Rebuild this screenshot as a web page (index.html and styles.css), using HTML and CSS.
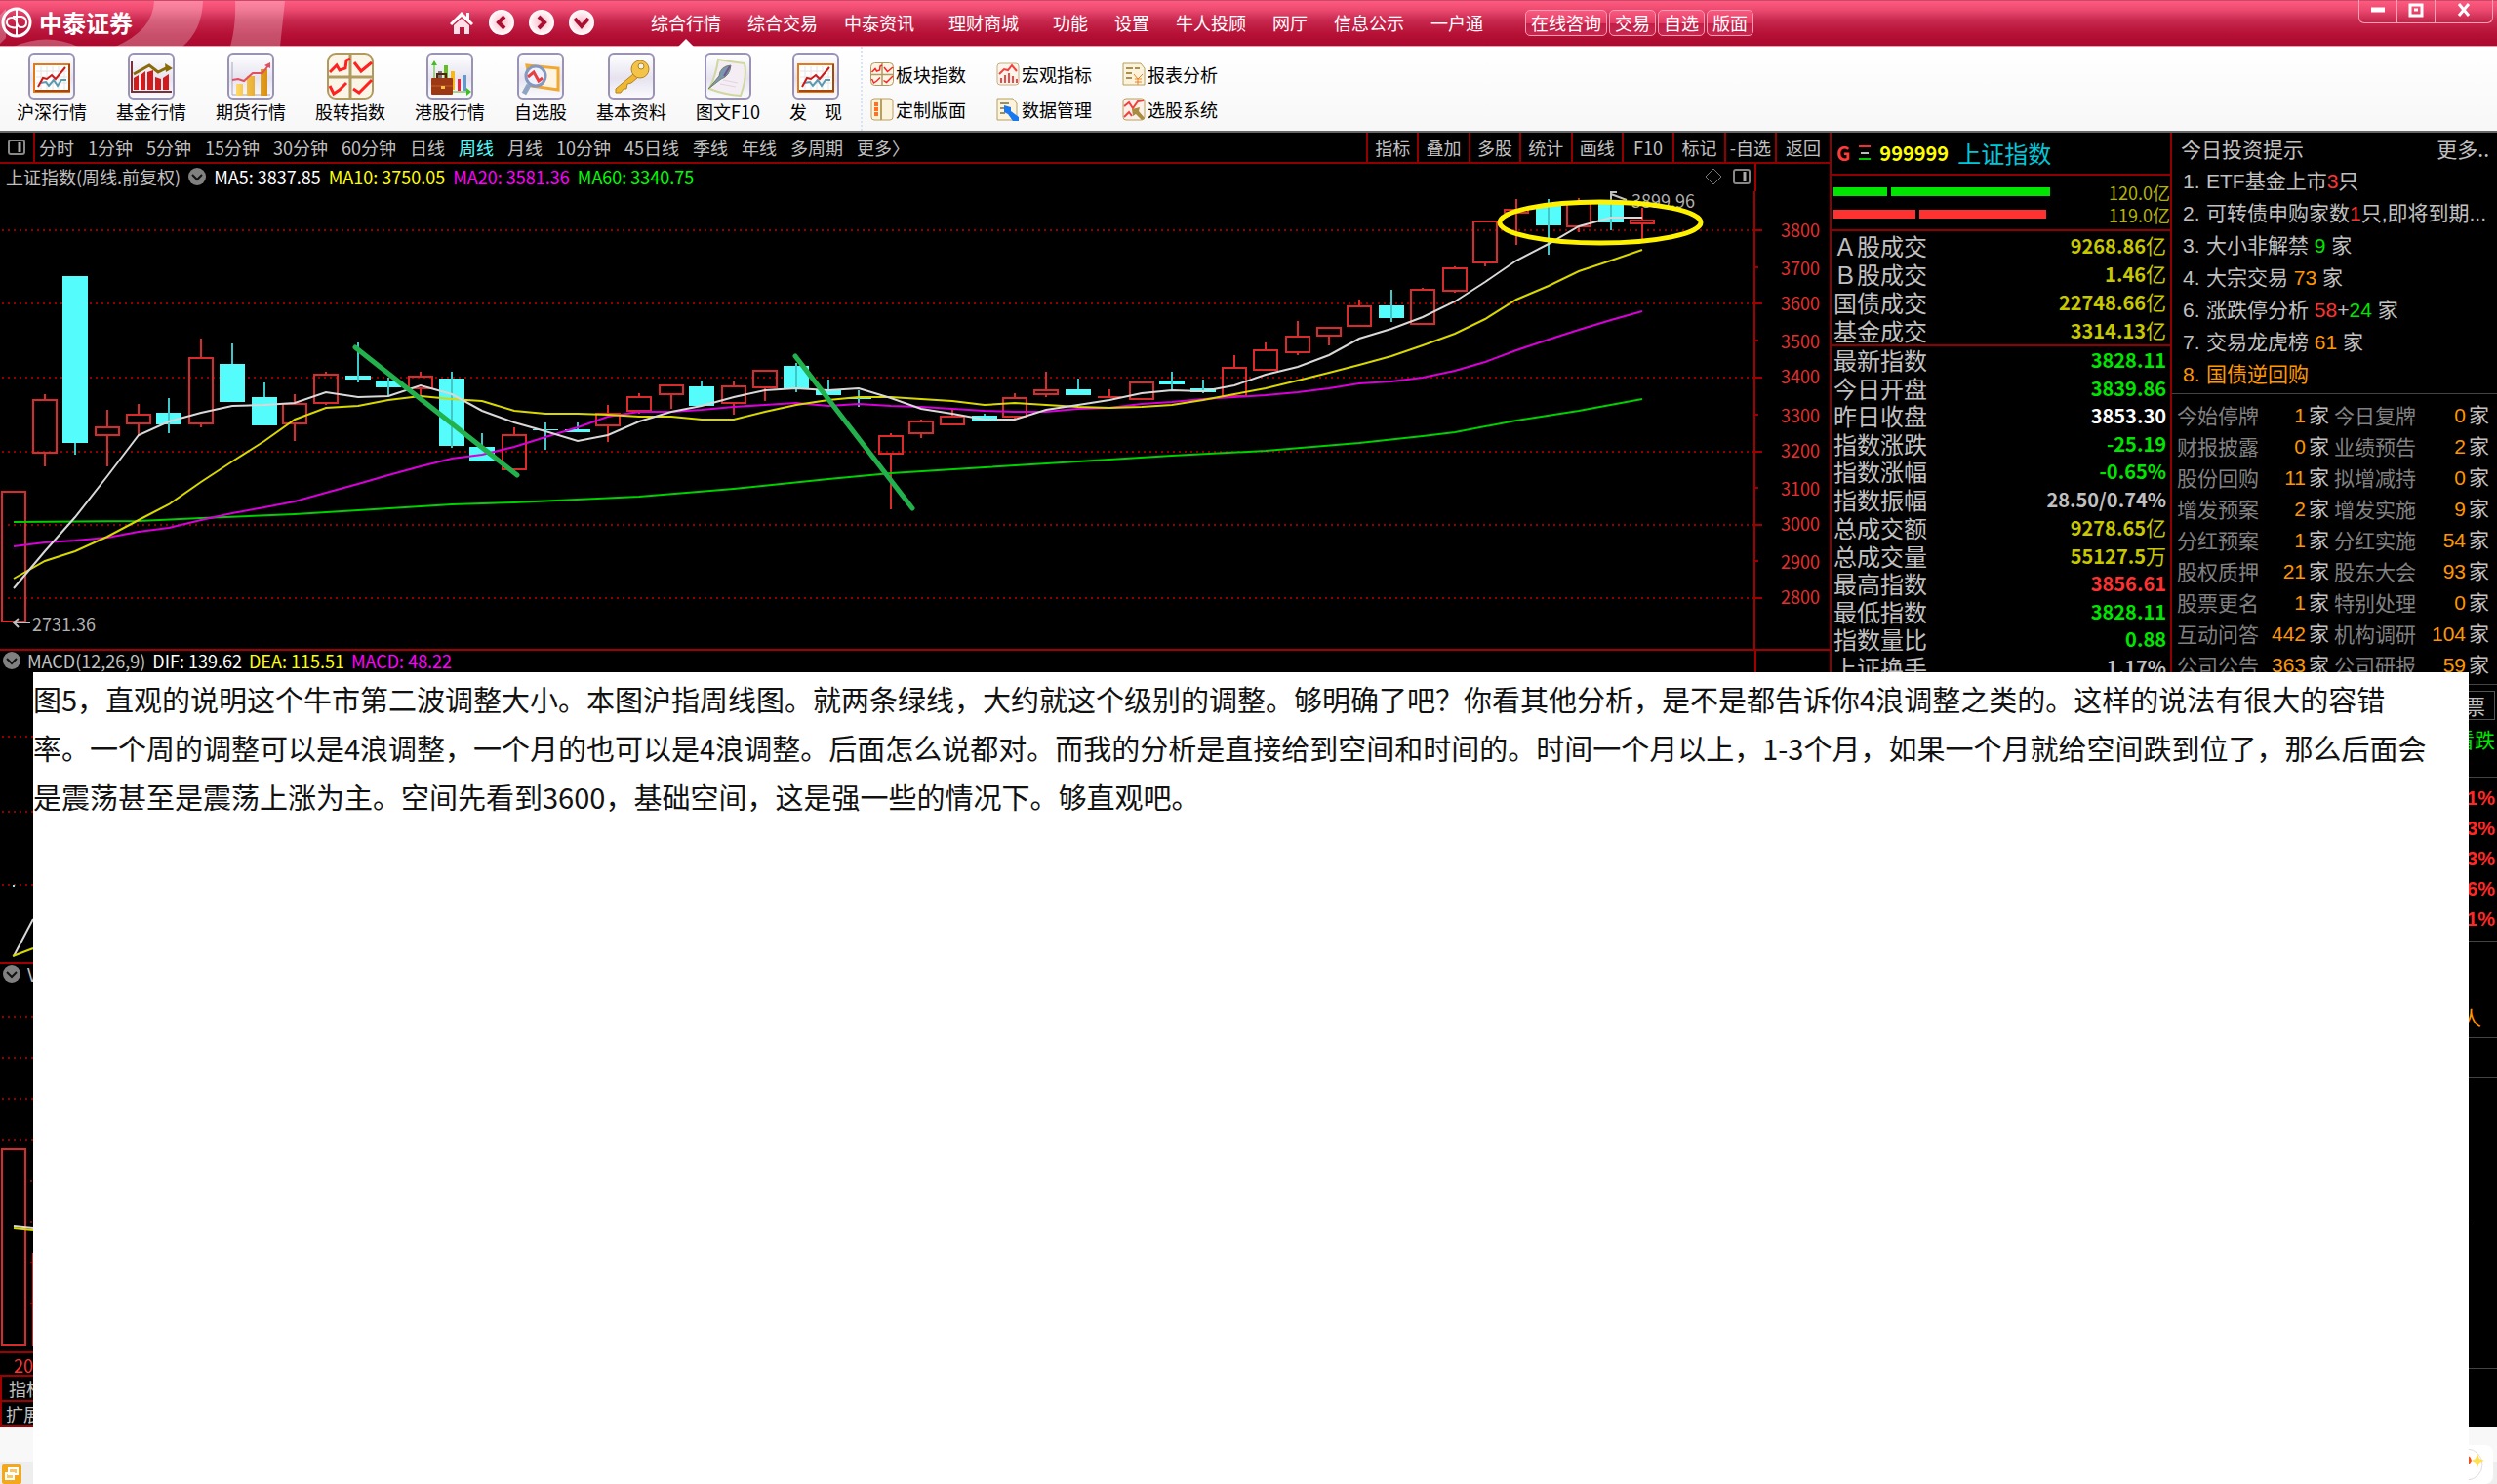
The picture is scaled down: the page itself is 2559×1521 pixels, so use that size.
FILE: index.html
```html
<!DOCTYPE html>
<html lang="zh-CN">
<head>
<meta charset="utf-8">
<title>中泰证券</title>
<link rel="stylesheet" href="styles.css">
</head>
<body>
<svg class="defs" width="0" height="0" aria-hidden="true">
  <defs>
    <linearGradient id="tile" x1="0" y1="0" x2="0" y2="1"><stop offset="0" stop-color="#fff"/><stop offset=".55" stop-color="#e6e3ef"/><stop offset="1" stop-color="#fbfbfe"/></linearGradient>
    <linearGradient id="gold" x1="0" y1="0" x2="1" y2="0"><stop offset="0" stop-color="#ffd966"/><stop offset="1" stop-color="#d89010"/></linearGradient>
    <radialGradient id="ball"><stop offset="0" stop-color="#ffb8c8"/><stop offset="1" stop-color="#fff"/></radialGradient>
    <symbol id="frame" viewBox="0 0 48 48"><rect x="1" y="1" width="46" height="46" rx="5" fill="url(#tile)" stroke="#9a93b5" stroke-width="2"/></symbol>
    <symbol id="board" viewBox="0 0 48 48"><use href="#frame"/><rect x="6" y="12" width="36" height="28" fill="#fff" stroke="#e07a1c" stroke-width="2"/><path d="M7 39H42V12" fill="none" stroke="#a84808" stroke-width="2"/><path d="M13 14V38M19 14V38M25 14V38M31 14V38M37 14V38M8 19H40M8 25H40M8 31H40" stroke="#e4e4e4"/><path d="M12 31L18 30L21 34L26 28L30 34L34 28L39 28" fill="none" stroke="#5a9ab0" stroke-width="2"/><path d="M10 35L15 26L19 27L24 23L28 27L38 15" fill="none" stroke="#d01818" stroke-width="2"/></symbol>
    <symbol id="grid4" viewBox="0 0 48 48"><rect x="1" y="1" width="46" height="46" rx="8" fill="#fbf5e8" stroke="#b09a5e" stroke-width="2"/><path d="M24 1V47M1 25H47" stroke="#b09a5e" stroke-width="3"/><path d="M3 20L10 13L13 18L19 16L20 8L24 6M28 10L35 19L46 10M3 34L7 42L13 38L20 31M27 37L33 41L46 28" fill="none" stroke="#ff2020" stroke-width="3"/></symbol>
  </defs>
</svg>

<header class="titlebar">
  <svg class="swirl" width="300" height="47" viewBox="0 0 300 47" aria-hidden="true"><path d="M158 0H208Q207 30 187 47H118Q157 30 158 0ZM241 0H292L287 47H236Q242 25 241 0ZM14 47Q48 32 80 47ZM0 14L6 8V38L0 44Z" fill="#fff" fill-opacity=".27"/></svg>
  <h1 class="brand"><svg width="32" height="32" viewBox="0 0 32 32" aria-hidden="true"><circle cx="16" cy="16" r="14" fill="none" stroke="#fff" stroke-width="3"/><path d="M16 2V30M16 21Q14 22 11 21Q6 20 6 16Q6 11 11 11Q15 11 16 16Q17 21 21 21Q26 21 26 16Q26 11 21 10H12" fill="none" stroke="#fff" stroke-width="2"/></svg>中泰证券</h1>
  <div class="nav-buttons">
    <button aria-label="主页"><svg width="28" height="28" viewBox="0 0 28 28"><path d="M14 3L2 15L4 17L14 8L24 17L26 15L22 11V4H19V8Z" fill="#fff"/><path d="M6 17L14 10L22 17V26H17V19H12V26H6Z" fill="#ffe0e8"/></svg></button>
    <button aria-label="后退"><svg width="28" height="28" viewBox="0 0 28 28"><circle cx="14" cy="14" r="13" fill="url(#ball)"/><path d="M17 8L11 14L17 20" fill="none" stroke="#a81032" stroke-width="4"/></svg></button>
    <button aria-label="前进"><svg width="28" height="28" viewBox="0 0 28 28"><circle cx="14" cy="14" r="13" fill="url(#ball)"/><path d="M11 8L17 14L11 20" fill="none" stroke="#a81032" stroke-width="4"/></svg></button>
    <button aria-label="展开"><svg width="28" height="28" viewBox="0 0 28 28"><circle cx="14" cy="14" r="13" fill="url(#ball)"/><path d="M7 10L14 18L21 10" fill="none" stroke="#a81032" stroke-width="4"/></svg></button>
  </div>
  <nav class="menu">
    <a class="current" href="#">综合行情</a><a href="#">综合交易</a><a href="#">中泰资讯</a><a class="group" href="#">理财商城</a><a class="group" href="#">功能</a><a href="#">设置</a><a href="#">牛人投顾</a><a href="#">网厅</a><a href="#">信息公示</a><a href="#">一户通</a>
  </nav>
  <div class="pills"><button>在线咨询</button><button>交易</button><button>自选</button><button>版面</button></div>
  <div class="window-controls">
    <button aria-label="最小化"><svg width="16" height="16" viewBox="0 0 16 16"><path d="M1 8H15" stroke="#fff" stroke-width="5"/></svg></button>
    <button aria-label="还原"><svg width="16" height="16" viewBox="0 0 16 16"><path d="M2 3H14V14H2Z" fill="none" stroke="#fff" stroke-width="3"/><path d="M6 8H10" stroke="#fff" stroke-width="3"/></svg></button>
    <button class="close" aria-label="关闭"><svg width="16" height="16" viewBox="0 0 16 16"><path d="M3 2L13 14M13 2L3 14" stroke="#fff" stroke-width="3"/></svg></button>
  </div>
</header>

<div class="toolbar">
  <div class="tools">
    <button><svg width="48" height="48" aria-hidden="true"><use href="#board"/></svg>沪深行情</button>
    <button><svg width="48" height="48" viewBox="0 0 48 48" aria-hidden="true"><use href="#frame"/><path d="M4 9V40H45" fill="none" stroke="#7a3038" stroke-width="2"/><path d="M6 26L11 23V38H6ZM13 23L18 19V38H13ZM20 20L26 18V38H20ZM28 25L34 27V38H28ZM36 26L42 22V38H36Z" fill="#d01c1c"/><path d="M6 22L22 13L31 20L41 15" fill="none" stroke="#8a6a08" stroke-width="3"/><path d="M38 11L46 16L39 20Z" fill="#8a6a08"/></svg>基金行情</button>
    <button><svg width="48" height="48" viewBox="0 0 48 48" aria-hidden="true"><use href="#frame"/><path d="M5 10V43H44" fill="none" stroke="#aaa6b8"/><path d="M9 32H16V44H9ZM20 24H28V44H20ZM34 17H41V44H34Z" fill="url(#gold)"/><path d="M5 28L11 27L17 29L26 21L36 21L43 12" fill="none" stroke="#e05060" stroke-width="2"/><path d="M38 13L44 10V16Z" fill="#e05060"/></svg>期货行情</button>
    <button><svg width="48" height="48" aria-hidden="true"><use href="#grid4"/></svg>股转指数</button>
    <button><svg width="48" height="48" viewBox="0 0 48 48" aria-hidden="true"><use href="#frame"/><path d="M8 30V12M26 40H42" stroke="#50b820"/><path d="M5 13L8 8L11 13ZM41 36L46 40L41 44Z" fill="#40c020"/><path d="M18 13H22V28H18Z" fill="#60c020"/><path d="M12 19H16V28H12Z" fill="#777"/><path d="M25 19H29V38H25Z" fill="#f4b820"/><path d="M32 27H35V39H32Z" fill="#f02040"/><path d="M37 23H41V39H37Z" fill="#6898c8"/><rect x="5" y="26" width="22" height="17" rx="1" fill="#9c3814"/><path d="M11 26V22H20V26" fill="none" stroke="#5a2008" stroke-width="2"/><path d="M5 34H27" stroke="#c86028"/><path d="M15 34H19V37H15Z" fill="#f8c048"/></svg>港股行情</button>
    <button><svg width="48" height="48" viewBox="0 0 48 48" aria-hidden="true"><use href="#frame"/><path d="M10 13L42 16V38L14 34Z" fill="#fff4e0" stroke="#f0a830" stroke-width="3"/><circle cx="19" cy="24" r="10" fill="#eef2fc" stroke="#8498c0" stroke-width="3"/><path d="M11 25L17 20L22 29L26 26" fill="none" stroke="#e84040" stroke-width="3"/><path d="M12 33L7 42" stroke="#8fa4c0" stroke-width="5"/></svg>自选股</button>
    <button><svg width="48" height="48" viewBox="0 0 48 48" aria-hidden="true"><use href="#frame"/><path d="M26 22L8 37V41H13L16 37L19 37L20 32L24 31L30 26" fill="#f0b830" stroke="#b48420"/><circle cx="33" cy="17" r="9" fill="#f4c448" stroke="#b48420"/><circle cx="34" cy="14" r="3" fill="#f4f0e8" stroke="#b48420"/></svg>基本资料</button>
    <button><svg width="48" height="48" viewBox="0 0 48 48" aria-hidden="true"><use href="#frame"/><path d="M14 7Q25 9 41 11Q44 25 37 44Q21 43 5 37Q12 22 14 7Z" fill="#f4eef4" stroke="#d0d8a0" stroke-width="2"/><path d="M16 32L32 35M19 28L34 31" stroke="#e0d4e0"/><path d="M4 37L15 24Q16 14 27 13Q26 24 17 27Z" fill="#7c98b0" stroke="#71826e"/><path d="M20 24L26 14" stroke="#705890" stroke-width="2"/></svg>图文F10</button>
    <button><svg width="48" height="48" aria-hidden="true"><use href="#board"/></svg>发　现</button>
  </div>
  <div class="shortcuts">
    <button><svg width="24" height="24" aria-hidden="true"><use href="#grid4"/></svg>板块指数</button>
    <button><svg width="24" height="24" viewBox="0 0 24 24" aria-hidden="true"><rect x="1" y="1" width="22" height="22" rx="3" fill="#fff4ec" stroke="#c0b080"/><path d="M3 12L8 7L12 8L16 3L21 9" fill="none" stroke="#f04040" stroke-width="2"/><path d="M5 21V16M9 21V13M13 21V11M17 21V14M21 21V17" stroke="#f04848" stroke-width="2"/></svg>宏观指标</button>
    <button><svg width="24" height="24" viewBox="0 0 24 24" aria-hidden="true"><path d="M1 1H19L23 6V23H1Z" fill="#fbf3dc" stroke="#b8a060"/><path d="M4 6H11M4 11H10M4 16H10M13 6H18" stroke="#a89050" stroke-width="2"/><path d="M12 12L16 17L21 12M16 17V23M13 17H20M13 20H20" fill="none" stroke="#f08020"/></svg>报表分析</button>
    <button><svg width="24" height="24" viewBox="0 0 24 24" aria-hidden="true"><rect x="1" y="1" width="22" height="22" rx="3" fill="#fbf3dc" stroke="#b8a060"/><path d="M11 1V23" stroke="#b8a060" stroke-width="2"/><path d="M4 5H8V9H4ZM4 10H8V14H4ZM4 15H8V19H4Z" fill="#ff7020"/></svg>定制版面</button>
    <button><svg width="24" height="24" viewBox="0 0 24 24" aria-hidden="true"><path d="M1 1H17L21 6V23H1Z" fill="#fbf3dc" stroke="#b8a060"/><path d="M4 6H13M4 11H10M4 16H9" stroke="#989068" stroke-width="2"/><path d="M8 8L15 10V14L23 20V24H17L12 17L8 15Z" fill="#1878f0"/></svg>数据管理</button>
    <button><svg width="24" height="24" viewBox="0 0 24 24" aria-hidden="true"><rect x="1" y="1" width="22" height="22" rx="3" fill="#fdf0e8" stroke="#b8a060"/><path d="M2 9L7 5L11 11L16 4L22 3M2 20L7 15L10 19" fill="none" stroke="#f04040" stroke-width="2"/><path d="M10 12L18 10L17 14L23 21L20 23L14 17L11 19Z" fill="#a88c40"/></svg>选股系统</button>
  </div>
</div>

<main class="workspace">
  <section class="chart-panel">
    <div class="tabs">
      <button class="layout-toggle" aria-label="布局"><svg width="18" height="16" viewBox="0 0 18 16"><rect x="1" y="1" width="16" height="14" rx="2" fill="none" stroke="#888" stroke-width="2"/><path d="M12 3V13" stroke="#aaa" stroke-width="3"/></svg></button>
      <div class="periods"><button>分时</button><button>1分钟</button><button>5分钟</button><button>15分钟</button><button>30分钟</button><button>60分钟</button><button>日线</button><button class="active">周线</button><button>月线</button><button>10分钟</button><button>45日线</button><button>季线</button><button>年线</button><button>多周期</button><button>更多〉</button></div>
      <div class="actions"><button>指标</button><button>叠加</button><button>多股</button><button>统计</button><button>画线</button><button>F10</button><button>标记</button><button>-自选</button><button>返回</button></div>
    </div>
    <div class="legend">
      <div class="legend-main">
        <span>上证指数(周线.前复权)</span>
        <svg width="18" height="18" viewBox="0 0 18 18" aria-hidden="true"><circle cx="9" cy="9" r="9" fill="#808080"/><path d="M4 7L9 12L14 7" fill="none" stroke="#111" stroke-width="2"/></svg>
        <span class="white">MA5: 3837.85</span><span class="ma10">MA10: 3750.05</span><span class="ma20">MA20: 3581.36</span><span class="ma60">MA60: 3340.75</span>
        <svg class="legend-tools" width="48" height="18" viewBox="0 0 48 18" aria-hidden="true"><path d="M10 1L18 9L10 17L2 9Z" fill="none" stroke="#777"/><rect x="31" y="2" width="16" height="14" rx="2" fill="none" stroke="#888" stroke-width="2"/><path d="M42 4V14" stroke="#aaa" stroke-width="3"/></svg>
      </div>
      <div class="axis-gap"></div>
    </div>
    <svg class="plot" viewBox="0 196 1875 469" role="img" aria-label="上证指数周线">
      <path class="grid" d="M2 236H1798M2 311H1798M2 387H1798M2 463H1798M8 538H1798M8 613H1798"/>
      <path class="axis" d="M1798 196V665M1798 236H1806M1798 311H1806M1798 387H1806M1798 463H1806M1798 538H1806M1798 613H1806M1798 274H1802M1798 349H1802M1798 425H1802M1798 500H1802M1798 575H1802"/>
      <g class="axis-text"><text x="1825" y="243">3800</text><text x="1825" y="282">3700</text><text x="1825" y="318">3600</text><text x="1825" y="357">3500</text><text x="1825" y="393">3400</text><text x="1825" y="433">3300</text><text x="1825" y="469">3200</text><text x="1825" y="508">3100</text><text x="1825" y="544">3000</text><text x="1825" y="583">2900</text><text x="1825" y="619">2800</text></g>
      <path class="up" d="M2 504h24v133h-24ZM34 410h24v54h-24ZM46 404v6M46 464v14M98 438h24v8h-24ZM110 420v18M110 446v32M130 425h24v9h-24ZM142 414v11M142 434v12M194 367h24v67h-24ZM206 347v20M206 434v4M290 414h24v20h-24ZM302 404v10M302 434v18M322 384h24v29h-24ZM334 381v3M334 413v2M419 386h24v12h-24ZM431 381v5M431 398v8M515 446h24v35h-24ZM527 438v8M611 424h24v12h-24ZM623 415v9M623 436v17M643 407h24v14h-24ZM655 403v4M655 421v3M676 395h24v9h-24ZM688 404v15M740 396h24v17h-24ZM752 391v5M752 413v12M772 380h24v17h-24ZM784 397v14M901 447h24v18h-24ZM913 444v3M913 465v57M932 432h24v12h-24ZM944 430v2M944 444v5M964 427h24v8h-24ZM976 419v8M1028 408h24v19h-24ZM1040 403v5M1040 427v3M1060 400h24v4h-24ZM1072 381v19M1072 404v3M1125 407h24M1137 399v9M1158 392h24v17h-24ZM1253 377h24v29h-24ZM1265 364v13M1285 359h24v20h-24ZM1297 351v8M1318 345h24v16h-24ZM1330 329v16M1330 361v3M1350 336h24v8h-24ZM1362 344v10M1381 314h24v20h-24ZM1393 307v7M1446 297h24v35h-24ZM1458 295v2M1479 275h24v23h-24ZM1491 273v2M1491 298v2M1510 227h24v42h-24ZM1522 269v4M1542 215h24v3h-24ZM1554 204v47M1606 208h24v24h-24ZM1618 203v5M1618 232v6M1671 226h24v3h-24ZM1683 213v13M1683 229v16"/>
      <path class="down" d="M64 283h26v171h-26ZM160 423h26v12h-26ZM225 373h26v39h-26ZM258 407h26v29h-26ZM354 385h26v4h-26ZM385 390h26v7h-26ZM450 388h26v69h-26ZM481 458h26v15h-26ZM546 440h26v1h-26ZM579 440h26v3h-26ZM706 396h26v20h-26ZM803 375h26v23h-26ZM836 400h26v5h-26ZM867 408h26v1h-26ZM996 426h26v6h-26ZM1092 399h26v6h-26ZM1188 390h26v4h-26ZM1220 398h26v4h-26ZM1413 313h26v13h-26ZM1574 211h26v20h-26ZM1638 209h26v19h-26Z"/>
      <path class="down-wick" d="M77 454v12M173 408v36M238 352v21M271 392v15M367 351v41M398 387v19M463 381v78M494 444v14M559 433v28M592 433v7M719 390v6M816 372v30M849 389v11M880 400v17M1009 424v2M1105 388v11M1201 381v19M1233 389v14M1426 297v33M1587 204v57M1651 202v34"/>
      <polyline class="line ma60-line" points="14,535 142,534 206,531 302,527 367,523 463,517 527,515 655,509 752,501 849,491 913,485 1009,479 1105,473 1201,467 1297,462 1393,454 1458,447 1491,443 1554,431 1618,421 1683,409"/>
      <polyline class="line ma20-line" points="14,560 46,556 77,554 110,551 142,545 173,541 206,533 238,526 271,520 302,514 334,505 367,496 398,487 431,478 463,470 494,466 527,458 559,448 592,438 623,427 655,422 688,422 719,420 752,417 784,415 816,413 849,416 880,414 913,416 944,417 976,419 1009,421 1040,422 1072,422 1105,419 1137,418 1170,414 1201,412 1233,409 1265,407 1297,405 1330,402 1362,398 1393,393 1426,391 1458,387 1491,380 1522,371 1554,359 1587,348 1618,338 1651,328 1683,319"/>
      <polyline class="line ma10-line" points="14,593 46,575 77,565 110,550 142,533 173,517 206,494 238,473 271,452 302,430 334,418 367,416 398,410 431,406 463,409 494,411 527,421 559,424 592,424 623,425 655,427 688,427 719,430 752,430 784,422 816,415 849,410 880,407 913,407 944,409 976,411 1009,415 1040,413 1072,415 1105,417 1137,418 1170,417 1201,415 1233,410 1265,404 1297,398 1330,390 1362,382 1393,374 1426,365 1458,354 1491,342 1522,327 1554,307 1587,293 1618,278 1651,267 1683,256"/>
      <polyline class="line ma5-line" points="14,603 46,565 77,530 110,488 142,446 173,432 206,423 238,416 271,415 302,413 334,402 367,407 398,406 431,395 463,404 494,421 527,433 559,442 592,452 623,446 655,432 688,422 719,416 752,407 784,400 816,398 849,400 880,398 913,408 944,419 976,424 1009,430 1040,430 1072,420 1105,415 1137,410 1170,403 1201,400 1233,401 1265,395 1297,384 1330,376 1362,364 1393,347 1426,337 1458,325 1491,309 1522,289 1554,267 1587,250 1618,232 1651,223 1683,223"/>
      <path class="pointer" d="M31 638H14M19 634L14 638L19 643M1667 205L1651 199M1657 197H1651V204"/>
      <text class="mark" x="33" y="647">2731.36</text><text class="mark" x="1672" y="213">3899.96</text>
      <path class="trend" d="M364 356L530 487M815 365L935 521"/>
      <ellipse class="ring" cx="1640" cy="228" rx="103" ry="21"/>
    </svg>
    <div class="legend sub">
      <div class="legend-main">
        <svg width="18" height="18" viewBox="0 0 18 18" aria-hidden="true"><circle cx="9" cy="9" r="9" fill="#808080"/><path d="M4 7L9 12L14 7" fill="none" stroke="#111" stroke-width="2"/></svg>
        <span>MACD(12,26,9)</span><span class="white">DIF: 139.62</span><span class="ma10">DEA: 115.51</span><span class="ma20">MACD: 48.22</span>
      </div>
      <div class="axis-gap"></div>
    </div>
    <svg class="plot" viewBox="0 689 1875 297" role="img" aria-label="MACD">
      <path class="grid" d="M2 755H1798M2 832H1798M2 907H1798"/>
      <path d="M13 908h2" stroke="#54fcfc" stroke-width="2"/>
      <polyline class="line ma5-line" points="14,980 34,942"/><polyline class="line ma10-line" points="13,980 34,972"/>
    </svg>
    <div class="legend sub">
      <div class="legend-main">
        <svg width="18" height="18" viewBox="0 0 18 18" aria-hidden="true"><circle cx="9" cy="9" r="9" fill="#808080"/><path d="M4 7L9 12L14 7" fill="none" stroke="#111" stroke-width="2"/></svg>
        <span>VOL</span>
      </div>
    </div>
    <svg class="plot" viewBox="0 1010 1875 375" role="img" aria-label="成交量">
      <path class="grid" d="M2 1042H1798M2 1084H1798M2 1126H1798M2 1168H1798M31 1210H1798M31 1252H1798M31 1294H1798M31 1336H1798"/>
      <path class="up" d="M2 1178h24v201h-24ZM34 1285h24v94h-24Z"/>
      <polyline class="line ma5-line" points="14,1257 34,1259"/><polyline class="line ma10-line" points="14,1259 34,1261"/>
    </svg>
    <div class="dates">20</div>
    <div class="strip">指标</div>
    <div class="strip wide">扩展</div>
  </section>

  <section class="quote">
    <h2><span class="flag">G</span><svg width="12" height="16" viewBox="0 0 12 16" aria-hidden="true"><path d="M0 1H12" stroke="#f03030" stroke-width="2"/><path d="M2 8H10" stroke="#bbb" stroke-width="2"/><path d="M0 14H12" stroke="#00c800" stroke-width="2"/></svg><span class="code">999999</span><span class="name">上证指数</span></h2>
    <div class="depth">
      <div class="depth-row buy"><i class="b1"></i><i class="b2"></i><span>120.0亿</span></div>
      <div class="depth-row sell"><i class="s1"></i><i class="s2"></i><span>119.0亿</span></div>
    </div>
    <table class="figures">
      <tr><th>Ａ股成交</th><td class="y">9268.86<b>亿</b></td></tr>
      <tr><th>Ｂ股成交</th><td class="y">1.46<b>亿</b></td></tr>
      <tr><th>国债成交</th><td class="y">22748.66<b>亿</b></td></tr>
      <tr><th>基金成交</th><td class="y">3314.13<b>亿</b></td></tr>
    </table>
    <table class="figures">
      <tr><th>最新指数</th><td class="g">3828.11</td></tr>
      <tr><th>今日开盘</th><td class="g">3839.86</td></tr>
      <tr><th>昨日收盘</th><td class="w">3853.30</td></tr>
      <tr><th>指数涨跌</th><td class="g">-25.19</td></tr>
      <tr><th>指数涨幅</th><td class="g">-0.65%</td></tr>
      <tr><th>指数振幅</th><td>28.50/0.74%</td></tr>
      <tr><th>总成交额</th><td class="y">9278.65<b>亿</b></td></tr>
      <tr><th>总成交量</th><td class="y">55127.5<b>万</b></td></tr>
      <tr><th>最高指数</th><td class="r">3856.61</td></tr>
      <tr><th>最低指数</th><td class="g">3828.11</td></tr>
      <tr><th>指数量比</th><td class="g">0.88</td></tr>
      <tr><th>上证换手</th><td>1.17%</td></tr>
    </table>
  </section>

  <section class="info">
    <div class="info-head"><h2>今日投资提示</h2><a href="#">更多..</a></div>
    <ul class="tips">
      <li><span>1.</span>ETF基金上市<b class="r">3</b>只</li>
      <li><span>2.</span>可转债申购家数<b class="r">1</b>只,即将到期...</li>
      <li><span>3.</span>大小非解禁 <b class="g">9</b> 家</li>
      <li><span>4.</span>大宗交易 <b class="o">73</b> 家</li>
      <li><span>6.</span>涨跌停分析 <b class="r">58</b>+<b class="g">24</b> 家</li>
      <li><span>7.</span>交易龙虎榜 <b class="o">61</b> 家</li>
      <li class="o"><span>8.</span>国债逆回购</li>
    </ul>
    <table class="stats">
      <tr><th>今始停牌</th><td><b>1</b>家</td><th>今日复牌</th><td><b>0</b>家</td></tr>
      <tr><th>财报披露</th><td><b>0</b>家</td><th>业绩预告</th><td><b>2</b>家</td></tr>
      <tr><th>股份回购</th><td><b>11</b>家</td><th>拟增减持</th><td><b>0</b>家</td></tr>
      <tr><th>增发预案</th><td><b>2</b>家</td><th>增发实施</th><td><b>9</b>家</td></tr>
      <tr><th>分红预案</th><td><b>1</b>家</td><th>分红实施</th><td><b>54</b>家</td></tr>
      <tr><th>股权质押</th><td><b>21</b>家</td><th>股东大会</th><td><b>93</b>家</td></tr>
      <tr><th>股票更名</th><td><b>1</b>家</td><th>特别处理</th><td><b>0</b>家</td></tr>
      <tr><th>互动问答</th><td><b>442</b>家</td><th>机构调研</th><td><b>104</b>家</td></tr>
      <tr><th>公司公告</th><td><b>363</b>家</td><th>公司研报</th><td><b>59</b>家</td></tr>
    </table>
    <div class="block vote"><div class="stock-box">票</div><span class="g">看跌</span></div>
    <div class="block rates"><span>1%</span><span>3%</span><span>3%</span><span>6%</span><span>1%</span></div>
    <div class="block people">人</div>
    <div class="block slim"></div>
    <div class="block tall"></div>
    <div class="block tall"></div>
    <div class="block"></div>
  </section>
</main>

<footer class="statusbar">
  <div class="task"><svg width="20" height="20" viewBox="0 0 20 20" aria-hidden="true"><rect width="20" height="20" rx="2" fill="#f4a81c"/><path d="M7 4H16V10H7ZM4 9H12V15H4Z" fill="#f8c868" stroke="#fff" stroke-width="2"/></svg></div>
  <div class="badge"><svg width="40" height="40" viewBox="0 0 40 40" aria-hidden="true"><circle cx="17" cy="20" r="16" fill="#fff" stroke="#e4dcdc"/><path d="M16 13Q20 9 22 16Q19 22 16 19Z" fill="#f05020"/><path d="M28 9L30 14L35 16L30 18L28 23L26 18L22 16L26 14Z" fill="#ffe050"/></svg></div>
</footer>

<article class="note">
  <p>图5，直观的说明这个牛市第二波调整大小。本图沪指周线图。就两条绿线，大约就这个级别的调整。够明确了吧？你看其他分析，是不是都告诉你4浪调整之类的。这样的说法有很大的容错<br>率。一个周的调整可以是4浪调整，一个月的也可以是4浪调整。后面怎么说都对。而我的分析是直接给到空间和时间的。时间一个月以上，1-3个月，如果一个月就给空间跌到位了，那么后面会<br>是震荡甚至是震荡上涨为主。空间先看到3600，基础空间，这是强一些的情况下。够直观吧。</p>
</article>
</body>
</html>
```
FILE: styles.css
```css
* { box-sizing: border-box; }

body {
  position: relative;
  display: flex;
  flex-direction: column;
  min-height: 100vh;
  margin: 0;
  background: #000;
  color: #c0c0c0;
  font: 18px/24px "Noto Sans CJK SC", sans-serif;
  overflow-x: hidden;
}

h1, h2, p, ul { margin: 0; padding: 0; font-weight: 400; }
ul { list-style: none; }
a { color: inherit; text-decoration: none; }
button { padding: 0; border: 0; background: none; color: inherit; font: inherit; white-space: nowrap; }
svg { display: block; flex: none; }
table { border-collapse: collapse; width: 100%; }
th, td { padding: 0; font-weight: 400; white-space: nowrap; }
.defs { position: absolute; }

.white, .w { color: #fff; }
.y { color: #c8c800; }
.g { color: #00e600; }
.r { color: #ff3232; }
.o { color: #ff9600; }

/* title bar */
.titlebar {
  position: relative;
  display: flex;
  align-items: center;
  height: 48px;
  padding-bottom: 2px;
  border-top: 1px solid #c84a68;
  border-bottom: 1px solid #e8a0b0;
  background: linear-gradient(#ff5a80 0, #ec4a70 9px, #c8284e 20px, #b61036 34px, #aa082c 47px);
  color: #fff;
}
.swirl { position: absolute; left: 0; top: 0; }
.brand { display: flex; align-items: center; gap: 7px; width: 459px; padding-left: 1px; font-size: 24px; font-weight: 700; }
.nav-buttons { display: flex; gap: 13px; width: 208px; }
.menu { display: flex; gap: 27px; }
.menu a { position: relative; white-space: nowrap; }
.menu .group { margin-left: 8px; }
.menu .current::after {
  content: "";
  position: absolute;
  left: 50%;
  top: 29px;
  margin-left: -8px;
  border: 8px solid transparent;
  border-top: 0;
  border-bottom-color: #fff;
}
.pills { display: flex; gap: 2px; margin-left: 43px; }
.pills button { height: 27px; padding: 0 5px; border: 1px solid #ff9ab0; border-radius: 5px; background: linear-gradient(#f85a80, #e43c64 50%, #c02048 50%, #c82850); line-height: 24px; }
.window-controls { display: flex; align-self: flex-start; margin: -1px 4px 0 auto; border: 1px solid #f8a0b4; border-top: 0; border-radius: 0 0 6px 6px; }
.window-controls button { display: grid; place-items: center; width: 39px; height: 23px; padding-bottom: 4px; border-right: 1px solid #f8a0b4; }
.window-controls .close { width: 58px; border: 0; }

/* toolbar */
.toolbar { display: flex; height: 88px; border-bottom: 2px solid #666; background: linear-gradient(#fff, #f7f7f7); color: #000; }
.tools { display: flex; gap: 30px; padding: 6px 19px 0 17px; border-right: 2px dotted #d8e4f4; }
.tools button { display: flex; flex-direction: column; align-items: center; }
.shortcuts { display: grid; grid-template-columns: repeat(3, 99px); gap: 12px 30px; align-content: start; padding: 16px 0 0 8px; }
.shortcuts button { display: flex; align-items: center; gap: 2px; height: 24px; }

/* workspace */
.workspace { display: grid; grid-template-columns: 1fr 351px 333px; flex: 1; }
.chart-panel { min-width: 0; }
.tabs { display: flex; height: 32px; border-bottom: 2px solid #900000; }
.layout-toggle { display: grid; place-items: center; width: 36px; border-right: 2px solid #900000; }
.periods { display: flex; gap: 14px; padding-left: 4px; }
.periods .active { color: #54fcfc; }
.actions { display: grid; grid-template-columns: repeat(8, 1fr) 56px; width: 475px; margin-left: auto; }
.actions button { border-left: 2px solid #900000; }

.legend { display: flex; height: 28px; }
.legend-main { display: flex; flex: 1; align-items: center; gap: 8px; padding: 0 0 2px 6px; white-space: nowrap; }
.legend-tools { margin-left: auto; margin-right: 4px; }
.axis-gap { width: 77px; border-left: 2px solid #a00000; }
.legend.sub { height: 24px; border-top: 2px solid #a00000; }
.legend.sub .legend-main { gap: 7px; padding-left: 3px; }
.ma10 { color: #ff0; }
.ma20 { color: #f0f; }
.ma60 { color: #0f0; }

.plot { width: 100%; height: auto; }
.plot text { font: 18px "Noto Sans CJK SC", sans-serif; }
.grid { stroke: #900000; stroke-width: 2; stroke-dasharray: 2 4; fill: none; shape-rendering: crispEdges; }
.axis { stroke: #a00000; stroke-width: 2; fill: none; }
.axis-text { fill: #e03030; }
.up { stroke: #d82c2c; stroke-width: 2; fill: none; shape-rendering: crispEdges; }
.down { fill: #54fcfc; }
.down-wick { stroke: #40c8c8; stroke-width: 2; }
.line { fill: none; stroke-width: 2; }
.ma5-line { stroke: #d8d8d8; }
.ma10-line { stroke: #d8d800; }
.ma20-line { stroke: #d800d8; }
.ma60-line { stroke: #00d000; }
.pointer { stroke: #c0c0c0; stroke-width: 2; fill: none; }
.mark { fill: #b0b0b0; }
.trend { stroke: #22b14c; stroke-width: 5; stroke-linecap: round; }
.ring { fill: none; stroke: #fff200; stroke-width: 5; }

.dates { height: 24px; padding-left: 14px; border-top: 2px solid #a00000; color: #ff3232; }
.strip { height: 26px; padding-left: 7px; border: 2px solid #a00000; border-width: 2px 0 0 2px; }
.strip.wide { height: 28px; padding-left: 4px; border-bottom-width: 2px; }

/* quote panel */
.quote { border: 2px solid #900000; border-width: 0 2px; }
.quote h2 { display: flex; align-items: center; gap: 9px; height: 44px; padding-left: 5px; border-bottom: 2px solid #900000; }
.quote h2 span { line-height: 40px; }
.flag { color: #ff3c3c; font-size: 20px; font-weight: 700; }
.code { color: #ff0; font-size: 20px; font-weight: 700; }
.name { color: #00c8d8; font-size: 24px; }
.depth { height: 57px; padding-top: 5px; border-bottom: 2px solid #900000; }
.depth-row { display: flex; align-items: center; gap: 4px; height: 23px; padding-left: 2px; color: #b4b400; }
.depth-row span { margin-left: auto; }
.depth-row i { height: 9px; }
.buy i { background: #00e600; }
.sell i { background: #ff3232; }
.b1 { width: 55px; }
.b2 { width: 163px; }
.s1 { width: 84px; }
.s2 { width: 130px; }
.figures tr { height: 28px; }
.figures tr:nth-child(even) { height: 29px; }
.figures:last-child { border-top: 2px solid #900000; }
.figures th { padding-left: 2px; font-size: 24px; line-height: 28px; text-align: left; }
.figures td { padding-right: 4px; font-size: 20px; line-height: 28px; font-weight: 700; text-align: right; }
.figures td b { font-size: 21px; font-weight: 400; }

/* tips and statistics */
.info { min-width: 0; font-size: 21px; line-height: 31px; }
.info-head { display: flex; justify-content: space-between; padding: 1px 8px 1px 9px; }
.info h2 { font-size: 21px; }
.tips { padding-bottom: 3px; border-bottom: 1px solid #444; }
.tips li { display: flex; height: 33px; padding-left: 11px; font-family: "Liberation Sans", "Noto Sans CJK SC", sans-serif; line-height: 33px; white-space: pre; }
.tips span { width: 24px; }
.tips b, .stats b { font-family: "Liberation Sans", sans-serif; font-weight: 400; }
.stats { margin: 5px 0 4px; }
.stats tr { height: 31px; }
.stats tr:nth-child(even) { height: 32px; }
.stats th { width: 89px; padding-left: 5px; color: #808080; line-height: 31px; text-align: left; }
.stats td { width: 72px; line-height: 31px; text-align: right; }
.stats td:last-child { width: 83px; padding-right: 8px; }
.stats b { margin-right: 3px; color: #ff9600; }
.block { display: flex; flex-direction: column; align-items: flex-end; padding-right: 2px; border-top: 1px solid #444; }
.vote { height: 95px; padding-top: 6px; gap: 4px; }
.stock-box { padding: 0 9px; border: 1px solid #555; line-height: 28px; }
.rates { height: 168px; padding-top: 6px; color: #ff2828; font: 700 20px/31px "Liberation Sans", sans-serif; }
.people { height: 99px; padding: 62px 16px 0 0; color: #ff9600; }
.slim { height: 41px; }
.tall { height: 149px; }

/* status bar */
.statusbar { display: flex; justify-content: space-between; height: 58px; background: linear-gradient(#f8f8f8 35px, #eee 35px); }
.task { padding: 38px 0 0 2px; }
.badge { align-self: flex-end; width: 60px; height: 40px; margin-right: 4px; padding-left: 16px; border-radius: 8px; background: #fff; }

/* commentary sheet lying over the lower charts */
.note { position: absolute; left: 34px; right: 29px; top: 689px; bottom: 0; padding-top: 2px; background: #fff; color: #111; font-size: 29px; line-height: 50px; white-space: nowrap; overflow: hidden; }
```
